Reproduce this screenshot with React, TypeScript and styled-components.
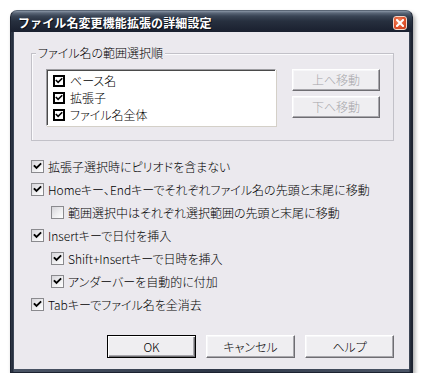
import React from "react";
import styled, { createGlobalStyle } from "styled-components";

const Global = createGlobalStyle`
  html, body { margin: 0; padding: 0; background: #ffffff; }
  body { font-family: "Noto Sans CJK JP", "Noto Sans", sans-serif; }
  * { box-sizing: border-box; }
`;

const UIFONT = `"Noto Sans CJK JP", "Noto Sans", sans-serif`;

const Window = styled.div`
  margin: 10px 0 0 10px;
  width: 403px;
  height: 363px;
  border-radius: 7px 7px 0 0;
  background: linear-gradient(90deg, #3a4455 0, #1e2533 1px, #2e3747 2px, #4b5566 3px, #2e3747 50%, #4b5566 calc(100% - 3px), #2a3241 calc(100% - 2px), #1a202c 100%);
  box-shadow: 2px 3px 4px rgba(0, 0, 0, 0.35);
  display: flex;
  flex-direction: column;
  padding: 0 3px 3px 3px;
  border: 1px solid #1c2230;
  border-top-color: #5a6676;
`;

const TitleBar = styled.div`
  height: 21px;
  margin: 0 -3px;
  padding: 0 5px 0 7px;
  border-radius: 6px 6px 0 0;
  background: linear-gradient(180deg, #8a96a6 0, #5b6778 2px, #3a4556 5px, #27303f 10px, #1d2433 18px, #1a2030 100%);
  display: flex;
  align-items: center;
  justify-content: space-between;
`;

const Title = styled.span`
  font-family: ${UIFONT};
  font-weight: 700;
  font-size: 12px;
  color: #ffffff;
  letter-spacing: 0.1px;
  text-shadow: 1px 1px 0 #0c1018;
  line-height: 1;
  margin-top: 2px;
`;

const CloseButton = styled.div`
  width: 14px;
  height: 14px;
  border-radius: 3px;
  border: 1px solid #f4d6c8;
  background: radial-gradient(circle at 40% 35%, #f08a62 0, #e0522c 55%, #c23a18 100%);
  display: flex;
  align-items: center;
  justify-content: center;
  margin-top: 2px;
`;

const Client = styled.div`
  flex: 1;
  background: #ebe9ee;
  display: flex;
  flex-direction: column;
  padding: 21px 15px 11px 17px;
  font-family: ${UIFONT};
  font-weight: 300;
  font-size: 12px;
  color: #000000;
  font-feature-settings: "palt";
`;

const GroupBox = styled.div`
  position: relative;
  height: 88px;
  border: 1px solid #c2c1c8;
  box-shadow: inset 1px 1px 0 #fbfbfd;
  display: flex;
  gap: 16px;
  padding: 15px 0 0 14px;
`;

const GroupLabel = styled.span`
  position: absolute;
  top: -9px;
  left: 4px;
  padding: 0 2px;
  background: #ebe9ee;
  line-height: 16px;
  font-size: 12px;
`;

const ListBox = styled.div`
  width: 230px;
  height: 57px;
  background: #ffffff;
  border: 1px solid;
  border-color: #9d9da1 #ffffff #ffffff #9d9da1;
  box-shadow: inset 1px 1px 0 #4a4a4a, 1px 1px 0 #d4d0c8;
  padding: 2px 0 0 6px;
  display: flex;
  flex-direction: column;
`;

const ListItem = styled.div`
  height: 17px;
  display: flex;
  align-items: center;
  gap: 5px;
  line-height: 1;
`;

const StateBox = styled.span`
  width: 12px;
  height: 12px;
  border: 2px solid #000000;
  background: #ffffff;
  display: flex;
  align-items: center;
  justify-content: center;
  flex: none;
`;

const SideButtons = styled.div`
  display: flex;
  flex-direction: column;
  gap: 5px;
`;

const Button = styled.button<{ $w: number; $h: number; $default?: boolean; $disabled?: boolean }>`
  width: ${(p) => p.$w}px;
  height: ${(p) => p.$h}px;
  font-family: ${UIFONT};
  font-weight: 300;
  font-feature-settings: "palt";
  font-size: 12px;
  line-height: 1;
  padding: 0;
  color: ${(p) => (p.$disabled ? "#a6a5aa" : "#000000")};
  background: #efeef1;
  border: 1px solid;
  border-color: ${(p) => (p.$default ? "#000000" : "#ffffff #6e6d72 #6e6d72 #ffffff")};
  box-shadow: ${(p) =>
    p.$default
      ? "inset 1px 1px 0 #ffffff, inset -1px -1px 0 #6e6d72, inset -2px -2px 0 #a8a7ac"
      : "inset -1px -1px 0 #a8a7ac, inset 1px 1px 0 #f7f7f9"};
  display: flex;
  align-items: center;
  justify-content: center;
`;

const Options = styled.div`
  display: flex;
  flex-direction: column;
  padding-top: 14px;
`;

const OptionRow = styled.label<{ $indent?: boolean }>`
  height: 23px;
  display: flex;
  align-items: center;
  gap: 4px;
  padding-left: ${(p) => (p.$indent ? 20 : 0)}px;
  line-height: 1;
  white-space: nowrap;
`;

const CheckBox = styled.span`
  width: 13px;
  height: 13px;
  border: 1px solid #8a8a8e;
  background: linear-gradient(135deg, #d6d5da 0%, #eeeef0 55%, #ffffff 100%);
  display: flex;
  align-items: center;
  justify-content: center;
  flex: none;
`;

const Footer = styled.div`
  margin-top: auto;
  display: flex;
  justify-content: flex-end;
  gap: 10px;
`;

const Check = ({ size }: { size: number }) => (
  <svg width={size} height={size} viewBox="0 0 9 9">
    <path d="M1.5 4 L3.5 6 L7.5 2" stroke="#000" strokeWidth="1.8" fill="none" strokeLinecap="square" />
  </svg>
);

const CloseX = () => (
  <svg width="8" height="8" viewBox="0 0 8 8">
    <path d="M1 1 L7 7 M7 1 L1 7" stroke="#fff" strokeWidth="2" strokeLinecap="square" />
  </svg>
);

type Opt = { label: string; checked: boolean; indent?: boolean };

const options: Opt[] = [
  { label: "拡張子選択時にピリオドを含まない", checked: true },
  { label: "Homeキー、Endキーでそれぞれファイル名の先頭と末尾に移動", checked: true },
  { label: "範囲選択中はそれぞれ選択範囲の先頭と末尾に移動", checked: false, indent: true },
  { label: "Insertキーで日付を挿入", checked: true },
  { label: "Shift+Insertキーで日時を挿入", checked: true, indent: true },
  { label: "アンダーバーを自動的に付加", checked: true, indent: true },
  { label: "Tabキーでファイル名を全消去", checked: true },
];

const listItems = ["ベース名", "拡張子", "ファイル名全体"];

export default function App() {
  return (
    <>
      <Global />
      <Window>
        <TitleBar>
          <Title>ファイル名変更機能拡張の詳細設定</Title>
          <CloseButton>
            <CloseX />
          </CloseButton>
        </TitleBar>
        <Client>
          <GroupBox>
            <GroupLabel>ファイル名の範囲選択順</GroupLabel>
            <ListBox>
              {listItems.map((t) => (
                <ListItem key={t}>
                  <StateBox>
                    <Check size={8} />
                  </StateBox>
                  {t}
                </ListItem>
              ))}
            </ListBox>
            <SideButtons>
              <Button $w={88} $h={22} $disabled>上へ移動</Button>
              <Button $w={88} $h={22} $disabled>下へ移動</Button>
            </SideButtons>
          </GroupBox>
          <Options>
            {options.map((o) => (
              <OptionRow key={o.label} $indent={o.indent}>
                <CheckBox>{o.checked && <Check size={9} />}</CheckBox>
                {o.label}
              </OptionRow>
            ))}
          </Options>
          <Footer>
            <Button $w={89} $h={23} $default>OK</Button>
            <Button $w={89} $h={23}>キャンセル</Button>
            <Button $w={89} $h={23}>ヘルプ</Button>
          </Footer>
        </Client>
      </Window>
    </>
  );
}
